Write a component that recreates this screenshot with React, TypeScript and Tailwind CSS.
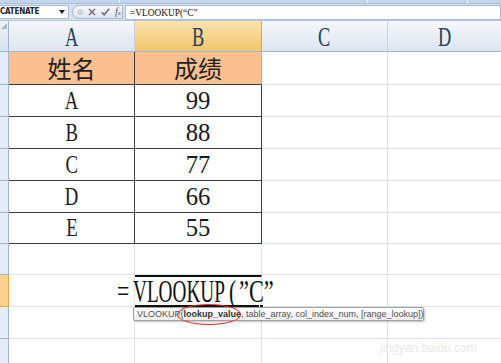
const serif = "font-['Liberation_Serif','Times_New_Roman',serif]";

type Row = { h: string; a?: string; b?: string; peach?: boolean; table?: boolean; active?: boolean };

const rows: Row[] = [
  { h: "h-[33px]", a: "姓名", b: "成绩", peach: true, table: true },
  { h: "h-[32px]", a: "A", b: "99", table: true },
  { h: "h-[32px]", a: "B", b: "88", table: true },
  { h: "h-[32px]", a: "C", b: "77", table: true },
  { h: "h-[32px]", a: "D", b: "66", table: true },
  { h: "h-[31px]", a: "E", b: "55", table: true },
  { h: "h-[31px]" },
  { h: "h-[32px]", active: true },
  { h: "h-[32px]" },
  { h: "h-[32px]" },
];

function CellText({ text }: { text?: string }) {
  if (!text) return null;
  if (/[\u4e00-\u9fff]/.test(text)) {
    return (
      <span className="font-['Noto_Sans_CJK_SC',sans-serif] text-[24px] leading-none text-[#222]">{text}</span>
    );
  }
  const isNum = /^\d+$/.test(text);
  return (
    <span
      className={`${serif} inline-block text-[26px] leading-none text-[#1a1a1a] ${isNum ? "scale-x-[0.95]" : "scale-x-[0.72]"}`}
    >
      {text}
    </span>
  );
}

function ColHeader({ label, selected, last }: { label: string; selected?: boolean; last?: boolean }) {
  return (
    <div
      className={`flex items-center justify-center border-b border-[#9eb6ce] ${
        last ? "flex-1" : "border-r"
      } ${
        selected
          ? "w-[127px] bg-gradient-to-b from-[#fbe2b0] to-[#f3c56b] border-r-[#e2a546]"
          : "w-[126px] bg-gradient-to-b from-[#f4f7fb] to-[#dde5f0] border-r-[#c5d3e4]"
      }`}
    >
      <span className={`${serif} inline-block text-[27px] leading-none text-[#28405a] scale-x-[0.68] translate-y-[1px]`}>
        {label}
      </span>
    </div>
  );
}

export default function App() {
  return (
    <div className="w-[501px] h-[363px] overflow-hidden bg-white relative select-none">
      {/* formula bar */}
      <div className="h-[21px] flex flex-col bg-[#d5e1ef] border-b border-[#b3c6dd]">
        <div className="h-[4px] flex bg-[#c3d5ea] border-b border-[#a9bfdb]">
          <div className="w-[120px] border-r border-white" />
          <div className="w-[248px] border-r border-white" />
          <div className="w-[100px] border-r border-white" />
        </div>
        <div className="flex-1 flex items-center">
          <div className="w-[69px] h-[14px] bg-white border border-[#a8bcd6] border-l-0 flex items-center justify-between pr-[3px]">
            <span className="font-['DejaVu_Sans_Condensed','DejaVu_Sans',sans-serif] font-bold text-[8px] leading-none text-[#222] tracking-[-0.2px]">
              CATENATE
            </span>
            <svg width="6" height="4" viewBox="0 0 6 4">
              <path d="M0 0h6L3 4z" fill="#222" />
            </svg>
          </div>
          <div className="ml-[3px] w-[51px] h-[14px] rounded-l-full rounded-r-[2px] border border-[#a7b7cc] bg-gradient-to-b from-[#f5f7fa] to-[#dfe5ee] flex items-center pl-[4px] gap-[5px]">
            <span className="w-[6px] h-[6px] rounded-full bg-gradient-to-b from-[#e8ecf0] to-[#b9c2cc] border border-[#c5ccd5]" />
            <svg width="8" height="8" viewBox="0 0 8 8">
              <path d="M1 1l6 6M7 1L1 7" stroke="#6b6b6b" strokeWidth="1.4" />
            </svg>
            <svg width="9" height="8" viewBox="0 0 9 8">
              <path d="M0.8 4.2l2.4 2.6L8.2 0.8" stroke="#6b6b6b" strokeWidth="1.5" fill="none" />
            </svg>
            <span className={`${serif} italic text-[10px] leading-none text-[#555]`}>
              f<span className="text-[7px]">x</span>
            </span>
          </div>
          <div className="ml-[2px] flex-1 h-[15px] bg-white border border-[#a8bcd6] flex items-center pl-[4px]">
            <span className={`${serif} text-[11px] leading-none text-[#111] scale-x-[0.85] origin-left inline-block`}>
              =VLOOKUP(“C”
            </span>
          </div>
        </div>
      </div>

      {/* column headers */}
      <div className="h-[31px] flex">
        <div className="w-[9px] relative bg-gradient-to-b from-[#eef2f8] to-[#d7e0ec] border-r border-b border-[#9eb6ce]">
          <svg className="absolute right-[1px] top-[2px]" width="6" height="6" viewBox="0 0 6 6">
            <path d="M6 0v6H0z" fill="#a7b9cf" />
          </svg>
        </div>
        <ColHeader label="A" />
        <ColHeader label="B" selected />
        <ColHeader label="C" />
        <ColHeader label="D" last />
      </div>

      {/* rows */}
      {rows.map((r, i) => (
        <div key={i} className={`${r.h} flex relative`}>
          <div
            className={`w-[9px] border-r border-b ${
              r.active ? "bg-[#f9d38d] border-[#e2a546]" : "bg-[#e4ecf7] border-[#9eb6ce]"
            }`}
          />
          <div
            className={`w-[126px] flex items-center justify-center border-r border-b ${
              r.peach ? "bg-[#fbc08f]" : ""
            } ${r.table ? "border-[#3c3c3c]" : "border-[#dae2ee]"}`}
          >
            <CellText text={r.a} />
          </div>
          <div
            className={`w-[127px] flex items-center justify-center border-b ${
              r.peach ? "bg-[#fbc08f] border-r border-r-[#d9a77c] border-b-[#3c3c3c]" : "border-r"
            } ${r.table && !r.peach ? "border-[#3c3c3c]" : ""} ${
              !r.table ? "border-[#dae2ee]" : ""
            } ${r.active ? "border-t-2 border-t-[#111] border-b-2 border-b-[#111] relative" : ""}`}
          >
            <CellText text={r.b} />
            {r.active && <span className="absolute right-[-3px] bottom-[-4px] w-[5px] h-[5px] bg-[#111] border border-white" />}
          </div>
          <div className="w-[126px] border-r border-b border-[#dae2ee]" />
          <div className="flex-1 border-b border-[#dae2ee]" />

          {r.active && (
            <div className={`absolute left-[117px] top-0 h-full flex items-center ${serif} text-[31px] leading-none text-[#111]`}>
              <span className="inline-block w-[16px] scale-x-[0.7] origin-left">=</span>
              <span className="inline-block w-[95px] whitespace-nowrap">
                <span className="inline-block scale-x-[0.62] origin-left">VLOOKUP</span>
              </span>
              <span className="inline-block w-[10px] ml-[1px]">
                <span className="inline-block scale-x-[0.7] origin-left">(</span>
              </span>
              <span className="inline-block whitespace-nowrap">
                <span className="inline-block scale-x-[0.72] origin-left">”C”</span>
              </span>
            </div>
          )}
        </div>
      ))}

      {/* function tooltip */}
      <div className="absolute left-[133px] top-[307px] h-[14px] w-[291px] bg-gradient-to-b from-[#ffffff] to-[#eeeeee] border border-[#a0a0a0] rounded-[2px] shadow-[1px_1px_2px_rgba(0,0,0,0.25)] flex items-center pl-[3px]">
        <span className="font-['Liberation_Sans',Arial,sans-serif] text-[9px] leading-none text-[#505050] whitespace-nowrap">
          VLOOKUP(<span className="font-bold text-[#333]">lookup_value</span>, table_array, col_index_num, [range_lookup])
        </span>
      </div>
      {/* red annotation ellipse */}
      <div className="absolute left-[177px] top-[304px] w-[64px] h-[21px] rounded-[50%] border-[1.5px] border-[#e3262a]" />

      {/* watermark */}
      <div className="absolute left-[380px] top-[339px] font-['Liberation_Sans',Arial,sans-serif] text-[12px] text-[#e9e9e9]">
        jingyan.baidu.com
      </div>
    </div>
  );
}
